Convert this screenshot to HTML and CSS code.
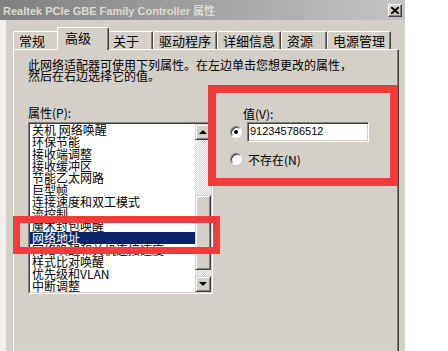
FILE: index.html
```html
<!DOCTYPE html>
<html lang="zh-CN">

<head>
    <meta charset="UTF-8">
    <meta name="viewport" content="width=device-width, initial-scale=1.0">
    <title>Realtek PCIe GBE Family Controller 属性</title>
    <link rel="stylesheet" href="styles.css">
</head>

<body>
    <div class="window">
        <div class="titlebar">
            <span class="title">Realtek PCIe GBE Family Controller 属性</span>
            <span class="close-btn">
                <svg width="8" height="7" viewBox="0 0 8 7">
                    <path d="M0 0 L8 7 M8 0 L0 7" stroke="#000" stroke-width="2" />
                </svg>
            </span>
        </div>

        <div class="client">
            <div class="tabs">
                <div class="tab">常规</div>
                <div class="tab active">高级</div>
                <div class="tab">关于</div>
                <div class="tab">驱动程序</div>
                <div class="tab">详细信息</div>
                <div class="tab">资源</div>
                <div class="tab">电源管理</div>
            </div>

            <div class="panel">
                <p class="desc">此网络适配器可使用下列属性。在左边单击您想更改的属性，<br>然后在右边选择它的值。</p>

                <div class="settings">
                    <div class="prop-col">
                        <div class="label">属性(P):</div>
                        <div class="listbox">
                            <div class="listbox-inner">
                                <ul class="items">
                                    <li>关机 网络唤醒</li>
                                    <li>环保节能</li>
                                    <li>接收端调整</li>
                                    <li>接收缓冲区</li>
                                    <li>节能乙太网路</li>
                                    <li>巨型帧</li>
                                    <li>连接速度和双工模式</li>
                                    <li>流控制</li>
                                    <li>魔术封包唤醒</li>
                                    <li class="selected">网络地址</li>
                                    <li>网络唤醒和关机连接速度</li>
                                    <li>样式比对唤醒</li>
                                    <li>优先级和VLAN</li>
                                    <li>中断调整</li>
                                </ul>
                                <div class="scrollbar">
                                    <div class="scroll-btn"><span class="arrow-up"></span></div>
                                    <div class="track">
                                        <div class="track-top"></div>
                                        <div class="thumb"></div>
                                        <div class="track-rest"></div>
                                    </div>
                                    <div class="scroll-btn"><span class="arrow-down"></span></div>
                                </div>
                            </div>
                        </div>
                    </div>

                    <div class="value-col">
                        <div class="value-label">值(V):</div>
                        <div class="radio-row">
                            <span class="radio checked"></span>
                            <div class="textbox">912345786512</div>
                        </div>
                        <div class="radio-row second">
                            <span class="radio"></span>
                            <span>不存在(N)</span>
                        </div>
                    </div>
                </div>
            </div>
        </div>

        <!-- red annotation frames -->
        <div class="mark mark-list"></div>
        <div class="mark mark-value"></div>
    </div>
</body>

</html>
```

FILE: styles.css
```css
body {
    margin: 0;
    background-color: #fff;
    font-family: 'Noto Sans CJK SC', 'Liberation Sans', sans-serif;
    font-size: 12px;
    color: #000;
}

.window {
    position: relative;
    width: 405px;
    height: 351px;
    overflow: hidden;
    background-color: #d4d0c8;
    display: flex;
    flex-direction: column;
}

/* title bar (inactive classic style) */
.titlebar {
    height: 20px;
    display: flex;
    align-items: center;
    justify-content: space-between;
    padding: 0 3px 0 3px;
    background: linear-gradient(to right, #808080, #c4c4c4);
}

.title {
    font-family: 'Liberation Sans', 'Noto Sans CJK SC', sans-serif;
    font-weight: bold;
    font-size: 11px;
    color: #dcdad4;
}

.close-btn {
    width: 14px;
    height: 13px;
    box-sizing: border-box;
    display: flex;
    align-items: center;
    justify-content: center;
    background-color: #d4d0c8;
    border: 1px solid;
    border-color: #fff #404040 #404040 #fff;
    box-shadow: inset -1px -1px #808080;
}

.client {
    flex: 1;
    display: flex;
    flex-direction: column;
    border-left: 6px solid #f1f0ec;
    padding: 0 6px 0 7px;
}

/* tabs */
.tabs {
    display: flex;
    align-items: flex-end;
    height: 29px;
    font-size: 13px;
}

.tab {
    height: 18px;
    min-width: 46px;
    box-sizing: border-box;
    padding: 1px 5px 0 5px;
    line-height: 16px;
    border-top: 1px solid #fff;
    border-left: 1px solid #fff;
    border-right: 1px solid #404040;
    border-radius: 2px 2px 0 0;
    box-shadow: inset -1px 0 #808080;
    white-space: nowrap;
}

.tab.active {
    position: relative;
    z-index: 1;
    height: 23px;
    margin: 0 -2px -1px -2px;
    padding: 3px 7px 0 7px;
    line-height: 14px;
    min-width: 52px;
    background-color: #d4d0c8;
}

.panel {
    flex: 1;
    border-top: 1px solid #fff;
    border-left: 1px solid #fff;
    border-right: 1px solid #404040;
    box-shadow: inset -1px 0 #808080;
    padding: 9px 0 0 14px;
}

.desc {
    margin: 0;
    line-height: 11px;
    white-space: nowrap;
}

.settings {
    display: flex;
    margin-top: 24px;
}

.prop-col {
    width: 185px;
}

.label {
    line-height: 15px;
    margin-bottom: 2px;
}

/* list box */
.listbox {
    height: 172px;
    box-sizing: border-box;
    border: 1px solid;
    border-color: #808080 #fff #fff #808080;
}

.listbox-inner {
    height: 100%;
    box-sizing: border-box;
    display: flex;
    border: 1px solid;
    border-color: #404040 #d4d0c8 #d4d0c8 #404040;
    background-color: #fff;
}

.items {
    flex: 1;
    list-style: none;
    margin: 0;
    padding: 0;
    overflow: hidden;
}

.items li {
    height: 12px;
    line-height: 12px;
    padding-left: 2px;
    white-space: nowrap;
    overflow: hidden;
}

.items li.selected {
    background-color: #0a246a;
    color: #fff;
}

.scrollbar {
    width: 16px;
    display: flex;
    flex-direction: column;
}

.scroll-btn,
.thumb {
    box-sizing: border-box;
    background-color: #d4d0c8;
    border: 1px solid;
    border-color: #d4d0c8 #404040 #404040 #d4d0c8;
    box-shadow: inset 1px 1px #fff, inset -1px -1px #808080;
}

.scroll-btn {
    height: 16px;
    display: flex;
    align-items: center;
    justify-content: center;
}

.arrow-up {
    border-left: 4px solid transparent;
    border-right: 4px solid transparent;
    border-bottom: 4px solid #000;
}

.arrow-down {
    border-left: 4px solid transparent;
    border-right: 4px solid transparent;
    border-top: 4px solid #000;
}

.track {
    flex: 1;
    display: flex;
    flex-direction: column;
    background: repeating-conic-gradient(#fff 0 25%, #d4d0c8 0 50%) 0 0 / 2px 2px;
}

.track-top {
    height: 55px;
}

.thumb {
    height: 75px;
}

.track-rest {
    flex: 1;
}

/* value group */
.value-col {
    margin-left: 17px;
    padding-top: 2px;
}

.value-label {
    padding-left: 13px;
    line-height: 14px;
}

.radio-row {
    display: flex;
    align-items: center;
    gap: 5px;
    height: 20px;
    margin-top: 1px;
}

.radio-row.second {
    gap: 6px;
    height: 16px;
    margin-top: 9px;
}

.radio {
    position: relative;
    width: 12px;
    height: 12px;
    box-sizing: border-box;
    border-radius: 50%;
    background-color: #fff;
    border: 1px solid;
    border-color: #808080 #fff #fff #808080;
    box-shadow: inset 1px 1px #404040;
}

.radio.checked::after {
    content: "";
    position: absolute;
    left: 3px;
    top: 3px;
    width: 4px;
    height: 4px;
    border-radius: 50%;
    background-color: #000;
}

.textbox {
    width: 122px;
    height: 20px;
    box-sizing: border-box;
    padding-left: 2px;
    font-family: 'Liberation Sans', sans-serif;
    font-size: 11px;
    line-height: 16px;
    background-color: #fff;
    border: 1px solid;
    border-color: #808080 #fff #fff #808080;
    box-shadow: inset 1px 1px #404040, inset -1px -1px #d4d0c8;
}

/* red highlight frames drawn over the dialog */
.mark {
    position: absolute;
    box-sizing: border-box;
    border: 7px solid #f23b3b;
}

.mark-list {
    left: 13px;
    top: 216px;
    width: 207px;
    height: 38px;
}

.mark-value {
    left: 208px;
    top: 85px;
    width: 190px;
    height: 101px;
    border-width: 8px;
}
```
